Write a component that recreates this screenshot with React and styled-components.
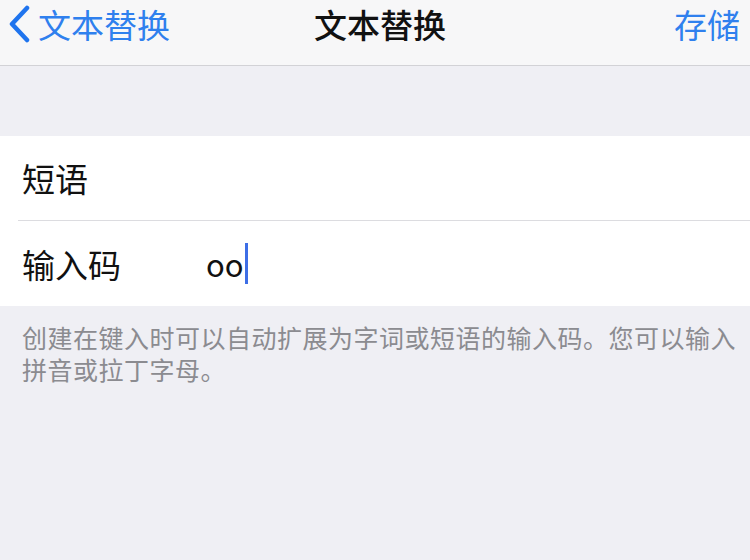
import React from "react";
import styled, { createGlobalStyle } from "styled-components";

const GlobalStyle = createGlobalStyle`
    html, body {
        margin: 0;
        padding: 0;
        background-color: #efeff4;
        font-family: "Noto Sans CJK SC", "Noto Sans", sans-serif;
    }
`;

const Page = styled.div`
    width: 750px;
    height: 560px;
    overflow: hidden;
    background-color: #efeff4;
`;

const NavBar = styled.div`
    height: 66px;
    box-sizing: border-box;
    padding-top: 4px;
    display: grid;
    grid-template-columns: 1fr auto 1fr;
    align-items: start;
    background-color: #f7f7f8;
    border-bottom: 1px solid #d2d2d6;
`;

const BackButton = styled.div`
    display: flex;
    align-items: center;
    gap: 8px;
    padding-left: 8px;
    height: 40px;
    color: #2f80ee;
    font-size: 33px;
    line-height: 40px;
`;

const Title = styled.div`
    padding-left: 10px;
    font-size: 33px;
    line-height: 40px;
    font-weight: 500;
    color: #111;
`;

const SaveButton = styled.div`
    justify-self: end;
    padding-right: 10px;
    font-size: 33px;
    line-height: 40px;
    color: #2f80ee;
`;

const Spacer = styled.div`
    height: 70px;
`;

const Group = styled.div`
    background-color: #fff;
`;

const Row = styled.div`
    display: flex;
    align-items: center;
    height: ${(p) => (p.last ? "85px" : "84px")};
    margin-left: 18px;
    padding-left: 4px;
    border-bottom: ${(p) => (p.last ? "none" : "1px solid #dcdce0")};
`;

const Label = styled.span`
    width: 184px;
    font-size: 33px;
    color: #111;
`;

const Value = styled.span`
    display: flex;
    align-items: center;
    font-size: 31px;
    color: #111;
`;

const Caret = styled.span`
    display: inline-block;
    width: 3px;
    height: 41px;
    margin-left: 1px;
    background-color: #3d6ee6;
`;

const Footer = styled.p`
    margin: 0;
    padding: 15px 8px 0 22px;
    font-size: 25px;
    letter-spacing: 0.5px;
    line-height: 32px;
    color: #8b8b90;
`;

const Chevron = () => (
    <svg width="22" height="38" viewBox="0 0 22 38">
        <path d="M19 3 L4 19 L19 35" fill="none" stroke="#1f74ee" strokeWidth="4.5" strokeLinecap="round" strokeLinejoin="round" />
    </svg>
);

const App = () => {
    return (
        <Page>
            <GlobalStyle />
            <NavBar>
                <BackButton>
                    <Chevron />
                    <span>文本替换</span>
                </BackButton>
                <Title>文本替换</Title>
                <SaveButton>存储</SaveButton>
            </NavBar>
            <Spacer />
            <Group>
                <Row>
                    <Label>短语</Label>
                </Row>
                <Row last>
                    <Label>输入码</Label>
                    <Value>oo<Caret /></Value>
                </Row>
            </Group>
            <Footer>创建在键入时可以自动扩展为字词或短语的输入码。您可以输入拼音或拉丁字母。</Footer>
        </Page>
    );
};

export default App;
